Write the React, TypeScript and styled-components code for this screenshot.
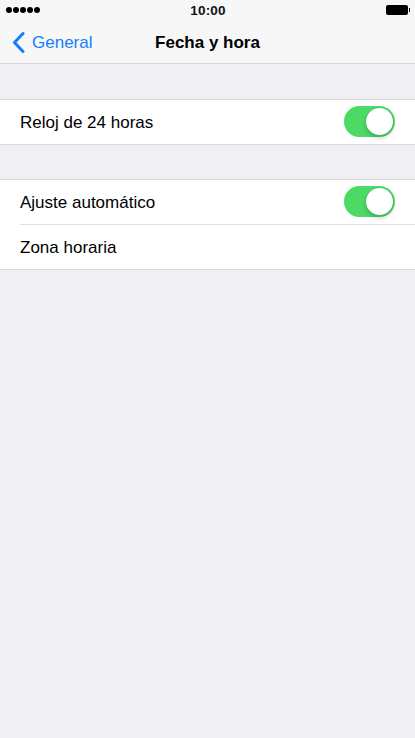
import React from "react";
import styled, { createGlobalStyle } from "styled-components";

const Global = createGlobalStyle`
  html, body { margin: 0; padding: 0; background: #efeff4; }
  body { font-family: "Liberation Sans", Arial, sans-serif; -webkit-font-smoothing: antialiased; }
`;

const Page = styled.div`
  width: 415px;
  height: 738px;
  background: #efeff4;
  display: flex;
  flex-direction: column;
`;

const Header = styled.div`
  background: #f7f7f7;
  border-bottom: 1px solid #d7d7db;
  height: 64px;
  box-sizing: border-box;
  display: flex;
  flex-direction: column;
`;

const StatusBar = styled.div`
  height: 20px;
  display: grid;
  grid-template-columns: 1fr auto 1fr;
  align-items: center;
  padding: 0 5px 0 6px;
`;

const Signal = styled.div`
  display: flex;
  gap: 1px;
`;

const Dot = styled.span`
  width: 6px;
  height: 6px;
  border-radius: 50%;
  background: #000;
`;

const Time = styled.div`
  font-size: 13.5px;
  font-weight: 700;
  color: #111;
  letter-spacing: 0.2px;
  padding-top: 1px;
`;

const Battery = styled.div`
  justify-self: end;
  display: flex;
  align-items: center;
`;

const BatteryBody = styled.span`
  width: 22px;
  height: 10px;
  border-radius: 2px;
  background: #000;
`;

const BatteryTip = styled.span`
  width: 1.5px;
  height: 4px;
  margin-left: 1px;
  background: #000;
`;

const NavBar = styled.div`
  flex: 1;
  display: grid;
  grid-template-columns: 1fr auto 1fr;
  align-items: center;
  padding-top: 2px;
`;

const Back = styled.div`
  display: flex;
  align-items: center;
  gap: 7px;
  padding-left: 12px;
  color: #157efb;
  font-size: 17px;
`;

const Title = styled.div`
  font-size: 17px;
  font-weight: 700;
  color: #000;
`;

const Group = styled.div<{ $top: number }>`
  margin-top: ${(p) => p.$top}px;
  background: #fff;
  border-top: 1px solid #d9d9dd;
  border-bottom: 1px solid #d9d9dd;
`;

const Row = styled.div<{ $divider?: boolean }>`
  margin-left: 20px;
  padding-right: 20px;
  display: flex;
  align-items: center;
  justify-content: space-between;
  box-sizing: border-box;
  border-bottom: ${(p) => (p.$divider ? "1px solid #e0e0e4" : "none")};
  height: ${(p) => (p.$divider ? 45 : 44)}px;
`;

const Label = styled.span`
  font-size: 17px;
  color: #000;
  padding-top: 2px;
`;

const Toggle = styled.div`
  width: 51px;
  height: 31px;
  border-radius: 16px;
  background: #4cd964;
  position: relative;
  flex: none;
  margin-top: -1px;
`;

const Knob = styled.span`
  position: absolute;
  top: 2px;
  right: 2px;
  width: 27px;
  height: 27px;
  border-radius: 50%;
  background: #fff;
  box-shadow: 0 3px 4px rgba(0, 0, 0, 0.18), 0 0 1px rgba(0, 0, 0, 0.2);
`;

const Switch = () => (
  <Toggle>
    <Knob />
  </Toggle>
);

export default function App() {
  return (
    <Page>
      <Global />
      <Header>
        <StatusBar>
          <Signal>
            {[0, 1, 2, 3, 4].map((i) => (
              <Dot key={i} />
            ))}
          </Signal>
          <Time>10:00</Time>
          <Battery>
            <BatteryBody />
            <BatteryTip />
          </Battery>
        </StatusBar>
        <NavBar>
          <Back>
            <svg width="13" height="21" viewBox="0 0 13 21">
              <path d="M11 1.5 L2.5 10.5 L11 19.5" fill="none" stroke="#157efb" strokeWidth="3" strokeLinecap="round" strokeLinejoin="round" />
            </svg>
            General
          </Back>
          <Title>Fecha y hora</Title>
          <div />
        </NavBar>
      </Header>
      <Group $top={35}>
        <Row>
          <Label>Reloj de 24 horas</Label>
          <Switch />
        </Row>
      </Group>
      <Group $top={34}>
        <Row $divider>
          <Label>Ajuste automático</Label>
          <Switch />
        </Row>
        <Row>
          <Label>Zona horaria</Label>
        </Row>
      </Group>
    </Page>
  );
}
